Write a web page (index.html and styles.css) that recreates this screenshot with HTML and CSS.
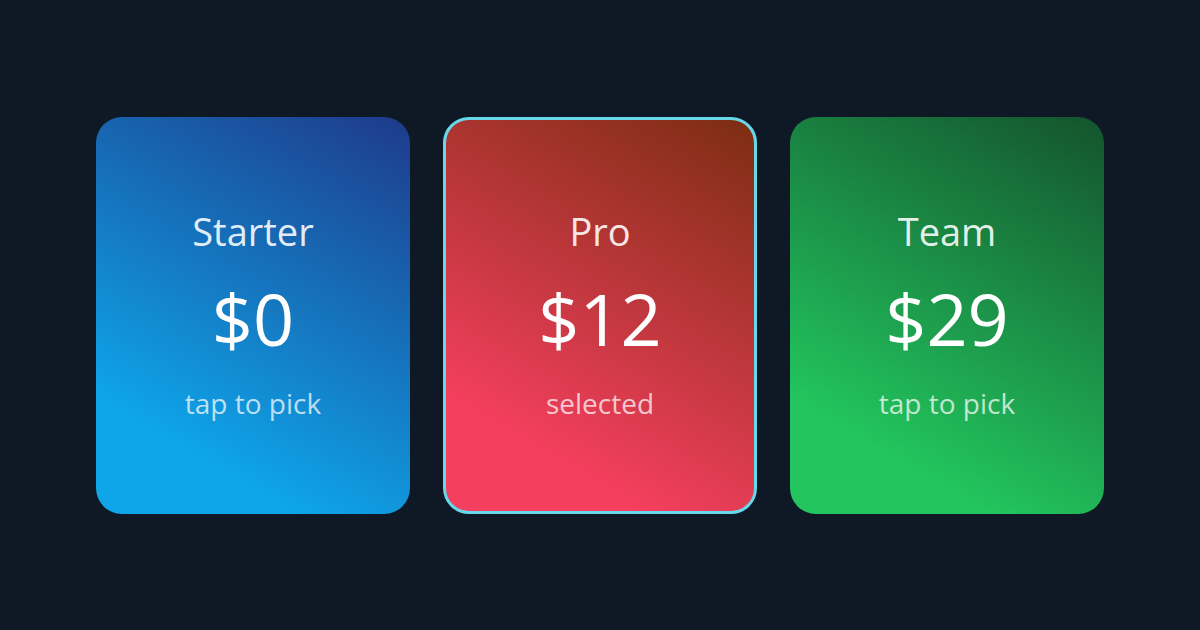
FILE: index.html
```html
<html><head>
<meta charset="UTF-8"><link rel="stylesheet" href="styles.css">
</head><body>
<div class="plans">
<div class="plan starter">
<div class="name">Starter</div>
<div class="price">$0</div>
<div class="hint">tap to pick</div>
</div>
<div class="plan pro selected">
<div class="name">Pro</div>
<div class="price">$12</div>
<div class="hint">selected</div>
</div>
<div class="plan team">
<div class="name">Team</div>
<div class="price">$29</div>
<div class="hint">tap to pick</div>
</div>
</div>
</body></html>
```
FILE: styles.css
```css
html, body { margin: 0; height: 100%; }
body { background: #0f1925; font-family: "Open Sans", sans-serif; color: #fff; }
.plans {
	height: 630px; display: flex; align-items: center; justify-content: center;
	gap: 33px;
}
.plan {
	width: 314px; height: 397px; box-sizing: border-box;
	border-radius: 26px; display: flex; flex-direction: column;
	align-items: center; justify-content: center; padding-bottom: 2px;
}
.starter { background: linear-gradient(30deg, #0ea5e9 20%, #1e3a8a 100%); }
.pro { background: linear-gradient(30deg, #f43f5e 20%, #7c2d12 100%); }
.team { background: linear-gradient(30deg, #22c55e 20%, #14532d 100%); }
.selected { border: 3px solid #67d8ea; }
.name { font-size: 38px; line-height: 48px; color: rgba(255,255,255,0.9); }
.price { font-size: 72px; line-height: 80px; margin-top: 23px; }
.hint { font-size: 28px; line-height: 36px; margin-top: 27px; color: rgba(255,255,255,0.72); }
```
